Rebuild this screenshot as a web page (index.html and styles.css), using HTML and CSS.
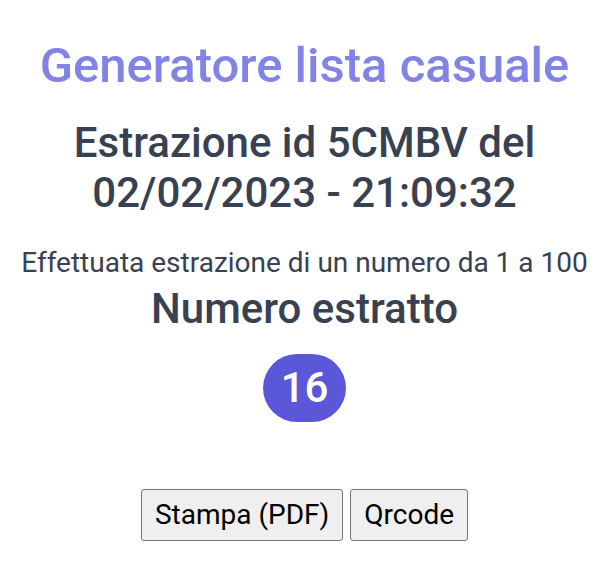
FILE: index.html
```html
<!DOCTYPE html>
<html lang="it">
<head>
  <meta charset="UTF-8" />
  <meta name="viewport" content="width=device-width, initial-scale=1.0"/>
  <title>Generatore lista casuale</title>
  <link rel="stylesheet" href="styles.css">
</head>
<body>
  <div class="page">
    <h1 class="title">Generatore lista casuale</h1>

    <h2 class="draw-id">Estrazione id 5CMBV del 02/02/2023 - 21:09:32</h2>

    <p class="info">Effettuata estrazione di un numero da 1 a 100</p>
    <h3 class="result-label">Numero estratto</h3>

    <div class="numbers">
      <span class="number">16</span>
    </div>

    <!-- Azioni -->
    <div class="actions">
      <button type="button">Stampa (PDF)</button>
      <button type="button">Qrcode</button>
    </div>
  </div>
</body>
</html>
```

FILE: styles.css
```css
body {
  margin: 0;
  font-family: Roboto, "Liberation Sans", sans-serif;
  background: #fff;
  color: #374151;
}

.page {
  padding: 41px 6px 20px 10px;
  text-align: center;
}

.title {
  margin: 0;
  font-size: 49px;
  line-height: 49px;
  font-weight: 500;
  color: #8184e6;
}

.draw-id {
  margin: 28px auto 0;
  max-width: 560px;
  font-size: 42px;
  line-height: 50px;
  font-weight: 500;
}

.info {
  margin: 28px 0 0;
  font-size: 28px;
  line-height: 34px;
  font-weight: 400;
}

.result-label {
  margin: 4px 0 0;
  font-size: 42px;
  line-height: 50px;
  font-weight: 500;
}

.numbers {
  margin-top: 20px;
  display: flex;
  justify-content: center;
}

.number {
  display: inline-block;
  padding: 8px 18px;
  border-radius: 999px;
  background: #5a57d9;
  color: #fff;
  font-size: 42px;
  font-weight: 500;
  line-height: 52px;
}

.actions {
  margin-top: 67px;
  display: flex;
  justify-content: center;
  gap: 7px;
}

.actions button {
  font-family: Roboto, "Liberation Sans", sans-serif;
  font-size: 28px;
  line-height: 32px;
  padding: 9px 13px;
  color: #000;
  background: #efefef;
  border: 1px solid #767676;
  border-radius: 3px;
}
```
